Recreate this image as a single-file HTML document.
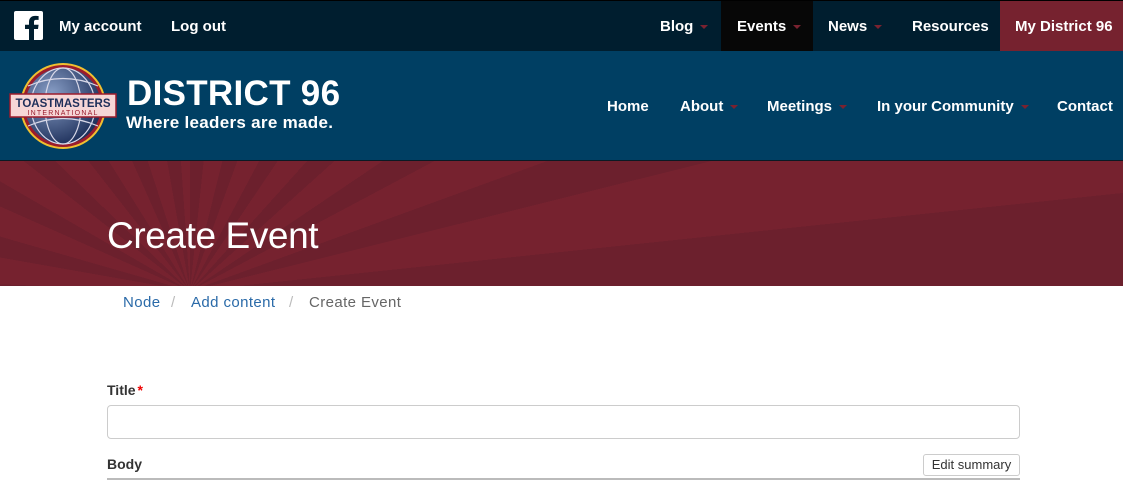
<!DOCTYPE html>
<html><head><style>
*{margin:0;padding:0;box-sizing:border-box}
html,body{width:1123px;height:480px;overflow:hidden}
body{background:#fff;font-family:"Liberation Sans",sans-serif;position:relative}
.top{position:absolute;left:0;top:0;width:1123px;height:51px;background:#001e2f;border-top:1px solid #000}
.top a{position:absolute;top:1px;height:50px;line-height:50px;color:#fff;font-size:15px;font-weight:bold;text-decoration:none;white-space:nowrap}
.car{display:inline-block;width:0;height:0;border-left:4px solid transparent;border-right:4px solid transparent;border-top:4px solid #7a2230;vertical-align:middle;margin-left:7px}
.hdr{position:absolute;left:0;top:51px;width:1123px;height:109px;background:#003f63}
.hdr a{position:absolute;top:48px;line-height:1;color:#fff;font-size:15px;font-weight:bold;white-space:nowrap}
.line{position:absolute;left:0;top:160px;width:1123px;height:1px;background:#0a1a24}
.ban{position:absolute;left:0;top:161px;width:1123px;height:125px;overflow:hidden;background:#76222f}
.rays{position:absolute;left:-1000px;top:-800px;width:2380px;height:2220px;background:repeating-conic-gradient(from 0deg at 1190px 930px,#6c202d 0deg 6deg,#76222f 6deg 14deg)}
.ban h1{position:absolute;left:107px;top:54px;color:#fff;font-weight:normal;font-size:37px;letter-spacing:-0.4px}
.bc{position:absolute;top:294px;font-size:15px;color:#666;letter-spacing:0.4px}
</style></head><body>
<div class="top">
 <svg style="position:absolute;left:14px;top:10px" width="29" height="29" viewBox="0 0 29 29"><rect width="29" height="29" rx="2" fill="#fff"/><path d="M20 29V18h4l.6-4.3H20v-2.7c0-1.2.4-2.1 2.1-2.1h2.5V5.1c-.4-.1-1.9-.2-3.6-.2-3.5 0-6 2.2-6 6.1v2.7h-4V18h4v11z" fill="#001e2f"/></svg>
 <a style="left:59px">My account</a>
 <a style="left:171px">Log out</a>
 <a style="left:660px">Blog<span class="car"></span></a>
 <div style="position:absolute;left:721px;top:0;width:92px;height:50px;background:#070707"></div>
 <a style="left:737px">Events<span class="car"></span></a>
 <a style="left:828px">News<span class="car"></span></a>
 <a style="left:912px">Resources</a>
 <div style="position:absolute;left:1000px;top:0;width:123px;height:50px;background:#76222f"></div>
 <a style="left:1015px">My District 96</a>
</div>
<div class="hdr">
 <svg style="position:absolute;left:8px;top:10px" width="110" height="90" viewBox="0 0 110 90">
  <defs><radialGradient id="g" cx="35%" cy="35%" r="70%"><stop offset="0" stop-color="#8aa0c8"/><stop offset="1" stop-color="#1d2f5a"/></radialGradient></defs>
  <circle cx="55" cy="45" r="43" fill="#f0c030"/><circle cx="55" cy="45" r="41" fill="#9b1c2c"/><circle cx="55" cy="45" r="38" fill="url(#g)"/>
  <g stroke="#d8d8e8" stroke-width="1.2" fill="none"><ellipse cx="55" cy="45" rx="18" ry="38"/><ellipse cx="55" cy="45" rx="32" ry="38"/><path d="M20 25Q55 10 90 25M17 45Q55 30 93 45M20 65Q55 50 90 65"/></g>
  <rect x="2" y="33" width="106" height="23" fill="#f6d6d6" stroke="#9b1c2c" stroke-width="1.5"/>
  <text x="55" y="46" text-anchor="middle" font-family="Liberation Sans" font-weight="bold" font-size="11.5" fill="#1d2f5a">TOASTMASTERS</text>
  <text x="55" y="54" text-anchor="middle" font-family="Liberation Sans" font-size="7" fill="#9b1c2c" letter-spacing="1.2">INTERNATIONAL</text>
 </svg>
 <div style="position:absolute;left:127px;top:25px;color:#fff;font-weight:bold;font-size:35px;line-height:1;letter-spacing:0.3px">DISTRICT 96</div>
 <div style="position:absolute;left:126px;top:63px;color:#fff;font-weight:bold;font-size:17px;line-height:1;letter-spacing:0.3px">Where leaders are made.</div>
 <a style="left:607px">Home</a>
 <a style="left:680px">About<span class="car"></span></a>
 <a style="left:767px">Meetings<span class="car"></span></a>
 <a style="left:877px">In your Community<span class="car"></span></a>
 <a style="left:1057px">Contact</a>
</div>
<div class="line"></div>
<div class="ban"><div class="rays"></div><h1>Create Event</h1></div>
<div class="bc" style="left:123px;color:#2a6aa8">Node</div>
<div class="bc" style="left:171px;color:#bbb">/</div>
<div class="bc" style="left:191px;color:#2a6aa8">Add content</div>
<div class="bc" style="left:289px;color:#bbb">/</div>
<div class="bc" style="left:309px">Create Event</div>
<div style="position:absolute;left:107px;top:382px;font-size:14px;font-weight:bold;color:#333">Title<span style="color:#e00;margin-left:2px">*</span></div>
<div style="position:absolute;left:107px;top:405px;width:913px;height:34px;border:1px solid #ccc;border-radius:4px"></div>
<div style="position:absolute;left:107px;top:456px;font-size:14px;font-weight:bold;color:#333">Body</div>
<div style="position:absolute;left:923px;top:454px;width:97px;height:22px;border:1px solid #ccc;border-radius:3px;font-size:13px;line-height:20px;text-align:center;color:#333">Edit summary</div>
<div style="position:absolute;left:107px;top:478px;width:913px;height:2px;background:#bbb"></div>
</body></html>
